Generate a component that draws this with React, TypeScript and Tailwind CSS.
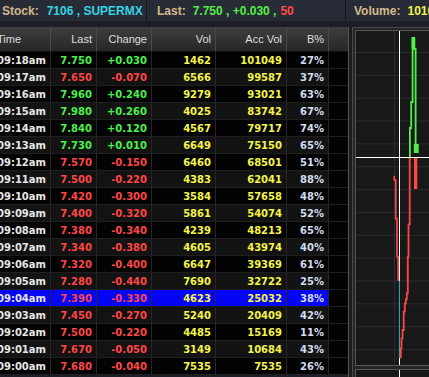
const trades = [
  ['09:18am', '7.750', '+0.030', '1462', '101049', '27%'],
  ['09:17am', '7.650', '-0.070', '6566', '99587', '37%'],
  ['09:16am', '7.960', '+0.240', '9279', '93021', '63%'],
  ['09:15am', '7.980', '+0.260', '4025', '83742', '67%'],
  ['09:14am', '7.840', '+0.120', '4567', '79717', '74%'],
  ['09:13am', '7.730', '+0.010', '6649', '75150', '65%'],
  ['09:12am', '7.570', '-0.150', '6460', '68501', '51%'],
  ['09:11am', '7.500', '-0.220', '4383', '62041', '88%'],
  ['09:10am', '7.420', '-0.300', '3584', '57658', '48%'],
  ['09:09am', '7.400', '-0.320', '5861', '54074', '52%'],
  ['09:08am', '7.380', '-0.340', '4239', '48213', '65%'],
  ['09:07am', '7.340', '-0.380', '4605', '43974', '40%'],
  ['09:06am', '7.320', '-0.400', '6647', '39369', '61%'],
  ['09:05am', '7.280', '-0.440', '7690', '32722', '25%'],
  ['09:04am', '7.390', '-0.330', '4623', '25032', '38%'],
  ['09:03am', '7.450', '-0.270', '5240', '20409', '42%'],
  ['09:02am', '7.500', '-0.220', '4485', '15169', '11%'],
  ['09:01am', '7.670', '-0.050', '3149', '10684', '43%'],
  ['09:00am', '7.680', '-0.040', '7535', '7535', '26%'],
];

const SELECTED = '09:04am';

const headCell = 'flex items-center justify-end pr-[4px] border-r border-[#4a4a4a]';
const bodyCell = 'flex items-center justify-end pr-[4px] border-r border-[#262626]';

function TopBar() {
  return (
    <div className="flex h-[21px] bg-[#262b36] font-['Liberation_Sans',Arial,sans-serif] font-bold text-[12px] whitespace-nowrap">
      <div className="flex items-center w-[147px] shrink-0 pl-[2px] border-r border-[#15181e]">
        <span className="text-[#d8b88c]">Stock:</span>
        <span className="ml-[8px] text-[#36d3e3]">7106 , SUPERMX</span>
      </div>
      <div className="flex items-center w-[199px] shrink-0 pl-[10px] border-r border-[#15181e]">
        <span className="text-[#d8b88c]">Last:</span>
        <span className="ml-[7px] text-[#55ee44]">7.750 , +0.030 ,</span>
        <span className="ml-[4px] text-[#ff4a4a]">50</span>
      </div>
      <div className="flex items-center pl-[8px]">
        <span className="text-[#d8b88c]">Volume:</span>
        <span className="ml-[7px] text-[#f2f24a]">101049</span>
      </div>
    </div>
  );
}

function TradeTable() {
  return (
    <div className="w-[349px] shrink-0 overflow-hidden border-r border-[#555]">
      <div className="-ml-[5px] w-[353px]">
        <div className="flex h-[25px] bg-gradient-to-b from-[#3f3f3f] to-[#272727] border-b border-[#111] text-[#dedede] text-[11px] font-['Liberation_Sans',Arial,sans-serif]">
          <div className="flex items-center pl-[2px] w-[56px] border-r border-[#4a4a4a]">Time</div>
          <div className={`${headCell} w-[46px]`}>Last</div>
          <div className={`${headCell} w-[55px]`}>Change</div>
          <div className={`${headCell} w-[64px]`}>Vol</div>
          <div className={`${headCell} w-[71px]`}>Acc Vol</div>
          <div className={`${headCell} w-[42px]`}>B%</div>
          <div className="w-[19px]" />
        </div>
        {trades.map((t, i) => {
          const up = t[2].startsWith('+');
          const price = up ? 'text-[#4cf04c]' : 'text-[#ff4646]';
          const bg = t[0] === SELECTED ? 'bg-[#0505f5]' : i % 2 ? 'bg-[#131313]' : 'bg-[#030303]';
          return (
            <div
              key={t[0]}
              className="flex h-[17px] border-b border-[#1f1f1f] font-['DejaVu_Sans',Verdana,sans-serif] font-bold text-[10px]"
            >
              <div className={`${bg} flex items-center pl-[2px] w-[56px] border-r border-[#262626] text-[#e6e6e6]`}>{t[0]}</div>
              <div className={`${bg} ${bodyCell} ${price} w-[46px]`}>{t[1]}</div>
              <div className={`${bg} ${bodyCell} ${price} w-[55px]`}>{t[2]}</div>
              <div className={`${bg} ${bodyCell} text-[#f4f44a] w-[64px]`}>{t[3]}</div>
              <div className={`${bg} ${bodyCell} text-[#f4f44a] w-[71px]`}>{t[4]}</div>
              <div className={`${bg} ${bodyCell} text-[#d2dcec] w-[42px]`}>{t[5]}</div>
              <div className="w-[19px] bg-[#030303]" />
            </div>
          );
        })}
      </div>
    </div>
  );
}

function TickChart() {
  const grid = Array.from({ length: 14 }, (_, k) => 21.5 + k * 22.85);
  return (
    <svg width="120" height="334" className="block">
      {grid.map((y) => (
        <line key={y} x1="0" x2="120" y1={y} y2={y} stroke="#2c2c2c" strokeWidth="1" />
      ))}
      <line x1="38.5" x2="38.5" y1="0" y2="334" stroke="#2c2c2c" strokeWidth="1" />
      <line x1="43.5" x2="43.5" y1="0" y2="334" stroke="#ffffff" strokeWidth="1" />
      <line x1="0" x2="120" y1="126.5" y2="126.5" stroke="#ffffff" strokeWidth="1" />

      {/* buy side */}
      <polyline points="56.6,7 56.6,71 55.2,71 55.2,97 53.9,97 53.9,126" fill="none" stroke="#4ff04a" strokeWidth="1.8" />
      <polyline points="58.2,7 58.2,18 59.6,18 59.6,113" fill="none" stroke="#4ff04a" strokeWidth="1.8" />
      <rect x="55.6" y="6" width="3.6" height="12" fill="#4ff04a" />
      <rect x="57.8" y="113" width="4.9" height="9" fill="#4ff04a" />

      {/* sell side */}
      <rect x="58" y="127" width="3.3" height="31" fill="#ff4646" />
      <polyline
        points="38.3,144.7 38.3,149 39.7,149 39.7,187.7 41,187.7 41,225.7 42.2,225.7 42.2,249.7"
        fill="none"
        stroke="#ff4646"
        strokeWidth="1.7"
      />
      <line x1="43.4" x2="43.4" y1="249.7" y2="327" stroke="#1a9c9c" strokeWidth="1" />
      <polyline
        points="53.7,127 53.7,193.3 52.5,193.3 52.5,225.7 51.8,225.7 51.8,262.3 50.8,262.3 50.8,268.3 49.8,268.3 49.8,272.3 48.8,272.3 48.8,280.7 47.7,280.7 47.7,299 46.5,299 46.5,307.3 45.5,307.3 45.5,317.3 44.8,317.3 44.8,327.3"
        fill="none"
        stroke="#ff4646"
        strokeWidth="1.8"
      />
    </svg>
  );
}

function ChartPanel() {
  return (
    <div className="flex-1 pl-[3px] bg-[#1c1c1c] overflow-hidden">
      <div className="w-[140px] border border-[#4a4a4a] bg-[#262626] p-[2px] flex flex-col gap-[3px]">
        <div className="h-[336px] border border-[#555] bg-[#181818] overflow-hidden">
          <TickChart />
        </div>
        <div className="h-[40px] border border-[#555] bg-[#181818] overflow-hidden">
          <svg width="120" height="40" className="block">
            <line x1="43.5" x2="43.5" y1="0" y2="40" stroke="#ffffff" strokeWidth="1" />
          </svg>
        </div>
      </div>
    </div>
  );
}

export default function App() {
  return (
    <div className="w-full h-[377px] overflow-hidden bg-[#1c1f26]">
      <TopBar />
      <div className="h-[6px] bg-[#1c1f26]" />
      <div className="flex">
        <TradeTable />
        <ChartPanel />
      </div>
    </div>
  );
}
